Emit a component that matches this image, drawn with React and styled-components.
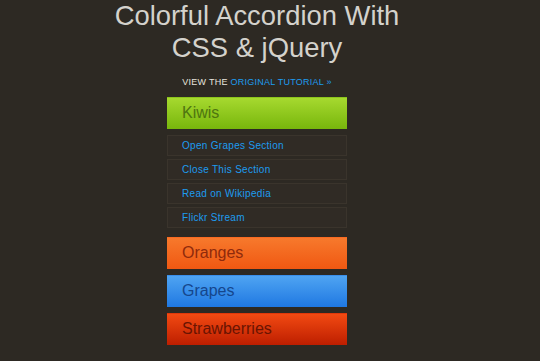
import styled, { createGlobalStyle } from "styled-components";

const Global = createGlobalStyle`
  html, body {
    margin: 0;
    padding: 0;
    background: #2d2923;
  }
  body {
    font-family: "Liberation Sans", Arial, sans-serif;
  }
`;

const Page = styled.div`
  width: 514px;
  height: 361px;
  margin: 0;
  display: flex;
  flex-direction: column;
  align-items: center;
`;

const Title = styled.h1`
  margin: 0;
  font-size: 27.4px;
  line-height: 32px;
  font-weight: normal;
  color: #d4d2cc;
  text-align: center;
`;

const Tagline = styled.p`
  margin: 12px 0 0;
  font-size: 9px;
  line-height: 12px;
  letter-spacing: 0.25px;
  color: #e6e4de;
  text-transform: uppercase;

  a {
    color: #1d9cf0;
    text-decoration: none;
  }
`;

const Accordion = styled.div`
  width: 180px;
  margin-top: 9px;
  display: flex;
  flex-direction: column;
`;

const colors = {
  green: { top: "#a6d92f", bottom: "#78b60c", text: "#4e7510", edge: "#8cc41c" },
  orange: { top: "#f7792c", bottom: "#f05812", text: "#8f2a0c", edge: "#f86a22" },
  blue: { top: "#4fa4f2", bottom: "#1f78e2", text: "#15468c", edge: "#3a8eea" },
  red: { top: "#f24a12", bottom: "#bd1e00", text: "#6a1402", edge: "#e0380a" },
};

const Header = styled.div`
  height: 32px;
  box-sizing: border-box;
  padding-left: 15px;
  margin-bottom: 6px;
  font-size: 16px;
  color: ${(p) => colors[p.$tone].text};
  background: linear-gradient(
    to bottom,
    ${(p) => colors[p.$tone].top},
    ${(p) => colors[p.$tone].bottom}
  );
  border-top: 1px solid ${(p) => colors[p.$tone].edge};
  line-height: 30px;
  cursor: pointer;
`;

const Submenu = styled.ul`
  list-style: none;
  margin: 0 0 9px;
  padding: 0;
  display: flex;
  flex-direction: column;
  gap: 3px;
`;

const Item = styled.li`
  height: 21px;
  box-sizing: border-box;
  padding-left: 14px;
  background: #302b25;
  border: 1px solid #3a342c;
  font-size: 10px;
  line-height: 19px;
  letter-spacing: 0.3px;

  a {
    color: #1d9cf0;
    text-decoration: none;
  }
`;

const links = [
  "Open Grapes Section",
  "Close This Section",
  "Read on Wikipedia",
  "Flickr Stream",
];

export default function App() {
  return (
    <Page>
      <Global />
      <Title>
        Colorful Accordion With
        <br />
        CSS &amp; jQuery
      </Title>
      <Tagline>
        View the <a href="#">Original Tutorial »</a>
      </Tagline>
      <Accordion>
        <Header $tone="green">Kiwis</Header>
        <Submenu>
          {links.map((l) => (
            <Item key={l}>
              <a href="#">{l}</a>
            </Item>
          ))}
        </Submenu>
        <Header $tone="orange">Oranges</Header>
        <Header $tone="blue">Grapes</Header>
        <Header $tone="red">Strawberries</Header>
      </Accordion>
    </Page>
  );
}
